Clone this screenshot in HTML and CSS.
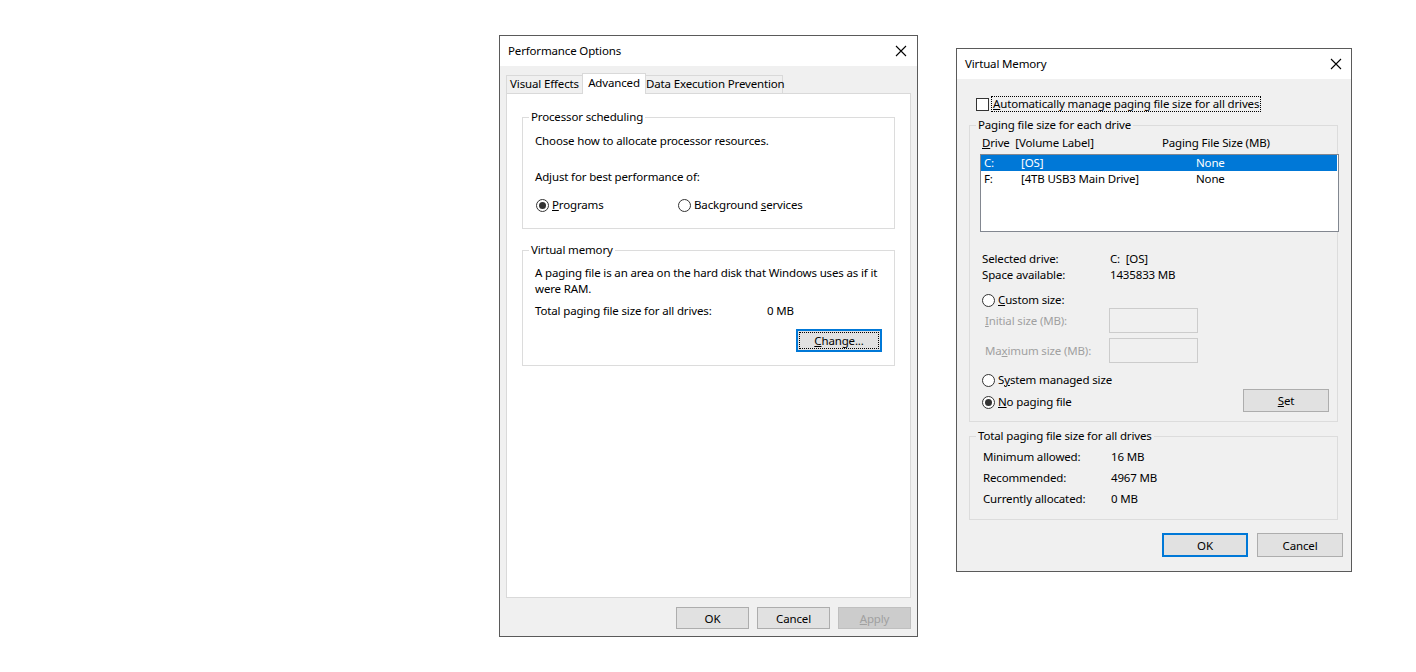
FILE: index.html
```html
<!DOCTYPE html>
<html>
  <head>
    <meta charset="utf-8" />
    <title>Performance Options</title>
    <link rel="stylesheet" href="styles.css">
  </head>
  <body>
    <div class="desktop">
      <div class="window perf">
        <div class="titlebar">
          <span class="title">Performance Options</span>
          <svg class="close" width="12" height="12" viewBox="0 0 12 12">
            <path d="M1 1 L11 11 M11 1 L1 11" stroke="#000" stroke-width="1.1" fill="none" />
          </svg>
        </div>
        <div class="win-body">
          <div class="tabs">
            <div class="tab tab-visual">Visual Effects</div>
            <div class="tab tab-adv active">Advanced</div>
            <div class="tab tab-dep">Data Execution Prevention</div>
          </div>
          <div class="tab-panel">
            <fieldset class="group sched">
              <legend>Processor scheduling</legend>
              <p class="line first">Choose how to allocate processor resources.</p>
              <p class="line adjust">Adjust for best performance of:</p>
              <div class="radio-row">
                <div class="radio-item programs"><span class="radio checked"></span><span><u>P</u>rograms</span></div>
                <div class="radio-item"><span class="radio"></span><span>Background <u>s</u>ervices</span></div>
              </div>
            </fieldset>
            <fieldset class="group vmem">
              <legend>Virtual memory</legend>
              <p class="line vm-desc">A paging file is an area on the hard disk that Windows uses as if it<br>were RAM.</p>
              <div class="kv total">
                <span class="k">Total paging file size for all drives:</span>
                <span class="v">0 MB</span>
              </div>
              <div class="change-row">
                <button class="btn btn-default change"><span class="focus"><u>C</u>hange...</span></button>
              </div>
            </fieldset>
          </div>
          <div class="button-row">
            <button class="btn">OK</button>
            <button class="btn">Cancel</button>
            <button class="btn disabled"><u>A</u>pply</button>
          </div>
        </div>
      </div>

      <div class="window vm">
        <div class="titlebar">
          <span class="title">Virtual Memory</span>
          <svg class="close" width="12" height="12" viewBox="0 0 12 12">
            <path d="M1 1 L11 11 M11 1 L1 11" stroke="#000" stroke-width="1.1" fill="none" />
          </svg>
        </div>
        <div class="win-body">
          <div class="check-row">
            <span class="checkbox"></span>
            <span class="focus"><u>A</u>utomatically manage paging file size for all drives</span>
          </div>
          <fieldset class="group each-drive">
            <legend>Paging file size for each drive</legend>
            <div class="list-head">
              <span class="col-drive"><u>D</u>rive&nbsp; [Volume Label]</span>
              <span>Paging File Size (MB)</span>
            </div>
            <div class="listbox">
              <div class="list-row selected">
                <span class="c1">C:</span><span class="c2">[OS]</span><span>None</span>
              </div>
              <div class="list-row">
                <span class="c1">F:</span><span class="c2">[4TB USB3 Main Drive]</span><span>None</span>
              </div>
            </div>
            <div class="kv sel first-kv">
              <span class="k">Selected drive:</span>
              <span class="v">C:&nbsp; [OS]</span>
            </div>
            <div class="kv sel">
              <span class="k">Space available:</span>
              <span class="v">1435833 MB</span>
            </div>
            <div class="radio-item custom"><span class="radio"></span><span><u>C</u>ustom size:</span></div>
            <div class="size-row">
              <span class="size-label"><u>I</u>nitial size (MB):</span>
              <span class="edit"></span>
            </div>
            <div class="size-row second">
              <span class="size-label">Ma<u>x</u>imum size (MB):</span>
              <span class="edit"></span>
            </div>
            <div class="radio-item sysman"><span class="radio"></span><span>S<u>y</u>stem managed size</span></div>
            <div class="nopage-row">
              <div class="radio-item"><span class="radio checked"></span><span><u>N</u>o paging file</span></div>
              <button class="btn set"><u>S</u>et</button>
            </div>
          </fieldset>
          <fieldset class="group totals">
            <legend>Total paging file size for all drives</legend>
            <div class="kv tot first-kv">
              <span class="k">Minimum allowed:</span>
              <span class="v">16 MB</span>
            </div>
            <div class="kv tot">
              <span class="k">Recommended:</span>
              <span class="v">4967 MB</span>
            </div>
            <div class="kv tot">
              <span class="k">Currently allocated:</span>
              <span class="v">0 MB</span>
            </div>
          </fieldset>
          <div class="button-row vm-buttons">
            <button class="btn btn-default wide">OK</button>
            <button class="btn wide">Cancel</button>
          </div>
        </div>
      </div>
    </div>
  </body>
</html>
```

FILE: styles.css
```css
body {
  margin: 0;
  background: #fff;
  font-family: "Noto Sans", "Open Sans", sans-serif;
  font-size: 11.5px;
  letter-spacing: -0.15px;
  line-height: 16px;
  color: #000;
}
p {
  margin: 0;
}
.desktop {
  position: relative;
  width: 1416px;
  height: 672px;
}

/* windows sit on the desktop canvas */
.window {
  position: absolute;
  box-sizing: border-box;
  border: 1px solid #5a5a5a;
  background: #f0f0f0;
  display: flex;
  flex-direction: column;
  white-space: nowrap;
}
.perf {
  left: 499px;
  top: 35px;
  width: 419px;
  height: 602px;
}
.vm {
  left: 956px;
  top: 48px;
  width: 396px;
  height: 524px;
}
.titlebar {
  height: 30px;
  background: #fff;
  display: flex;
  align-items: center;
  justify-content: space-between;
  padding: 0 10px 0 8px;
  flex-shrink: 0;
}
.vm .titlebar {
  padding-right: 9px;
}
.close {
  display: block;
}

.win-body {
  flex: 1;
}
.perf .win-body {
  padding: 7px 6px 6px 6px;
}
.vm .win-body {
  padding: 17px 13px 12px 12px;
}

/* tabs */
.tabs {
  display: flex;
  align-items: flex-end;
  height: 20px;
}
.tab {
  box-sizing: border-box;
  height: 18px;
  border: 1px solid #d9d9d9;
  border-bottom: none;
  background: #f0f0f0;
  text-align: center;
  line-height: 16px;
  margin-left: -1px;
}
.tab-visual {
  width: 77px;
  margin-left: 0;
}
.tab-adv {
  width: 64px;
}
.tab-dep {
  width: 138px;
}
.tab.active {
  position: relative;
  z-index: 1;
  height: 21px;
  margin-bottom: -1px;
  background: #fff;
  padding-top: 1px;
}
.tab-panel {
  box-sizing: border-box;
  height: 505px;
  border: 1px solid #d9d9d9;
  background: #fff;
  padding: 15px 15px;
}

/* group boxes */
.group {
  margin: 0;
  border: 1px solid #dcdcdc;
  min-width: 0;
  padding: 0 12px 15px 12px;
}
.group legend {
  padding: 0 2px;
  margin-left: -6px;
  line-height: 16px;
}
.line.first {
  margin-top: 8px;
}
.line.adjust {
  margin-top: 20px;
}
.radio-row {
  display: flex;
  margin-top: 12px;
  padding-left: 1px;
}
.radio-item {
  display: flex;
  align-items: center;
  height: 16px;
}
.radio-item.programs {
  width: 142px;
}
.radio {
  box-sizing: border-box;
  width: 13px;
  height: 13px;
  border: 1px solid #333;
  border-radius: 50%;
  background: #fff;
  margin-right: 3px;
  display: flex;
  align-items: center;
  justify-content: center;
  flex-shrink: 0;
}
.radio.checked::after {
  content: "";
  width: 7px;
  height: 7px;
  border-radius: 50%;
  background: #333;
}
.vmem {
  margin-top: 13px;
  padding-bottom: 13px;
}
.vm-desc {
  margin-top: 7px;
}
.kv {
  display: flex;
}
.kv .k {
  flex-shrink: 0;
}
.total {
  margin-top: 6px;
}
.total .k {
  width: 232px;
}
.change-row {
  display: flex;
  justify-content: flex-end;
  margin-top: 10px;
}

/* buttons */
.btn {
  box-sizing: border-box;
  width: 73px;
  height: 22px;
  padding: 0;
  border: 1px solid #adadad;
  background: #e1e1e1;
  font-family: inherit;
  font-size: 11.5px;
  letter-spacing: -0.15px;
  color: #000;
}
.btn-default {
  border: 2px solid #0078d7;
}
.btn.change {
  width: 86px;
  height: 23px;
  display: flex;
  align-items: center;
  justify-content: center;
  padding: 1px;
}
.btn.change .focus {
  flex: 1;
  align-self: stretch;
  border: 1px dotted #000;
  display: flex;
  align-items: center;
  justify-content: center;
}
.btn.disabled {
  background: #cccccc;
  border-color: #bfbfbf;
  color: #a0a0a0;
}
.button-row {
  display: flex;
  justify-content: flex-end;
  gap: 8px;
  margin-top: 9px;
}

/* virtual memory dialog */
.check-row {
  display: flex;
  align-items: center;
  height: 16px;
  padding-left: 7px;
}
.checkbox {
  box-sizing: border-box;
  width: 13px;
  height: 13px;
  border: 1px solid #333;
  background: #fff;
  margin-right: 2px;
}
.check-row .focus {
  border: 1px dotted #000;
  padding: 0 1px;
  line-height: 14px;
}
.each-drive {
  margin-top: 5px;
  padding-bottom: 9px;
}
.list-head {
  display: flex;
  margin-top: 2px;
}
.col-drive {
  width: 180px;
}
.listbox {
  box-sizing: border-box;
  width: 359px;
  height: 78px;
  margin: 3px 0 0 -2px;
  border: 1px solid #828790;
  background: #fff;
  position: relative;
}
.list-row {
  display: flex;
  height: 16px;
  padding-left: 3px;
  margin-right: 1px;
}
.list-row.selected {
  background: #0078d7;
  color: #fff;
}
.list-row .c1 {
  width: 37px;
}
.list-row .c2 {
  width: 175px;
}
.kv.sel .k {
  width: 128px;
}
.first-kv {
  margin-top: 19px;
}
.radio-item.custom {
  margin-top: 9px;
}
.size-row {
  display: flex;
  align-items: center;
  height: 25px;
}
.size-row.second {
  margin-top: 5px;
}
.size-label {
  width: 124px;
  padding-left: 3px;
  color: #a0a0a0;
}
.edit {
  box-sizing: border-box;
  width: 89px;
  height: 25px;
  border: 1px solid #cccccc;
  background: #f0f0f0;
}
.radio-item.sysman {
  margin-top: 9px;
}
.nopage-row {
  display: flex;
  align-items: flex-start;
  justify-content: space-between;
  margin-top: 1px;
  margin-right: -4px;
}
.nopage-row .radio-item {
  margin-top: 5px;
}
.btn.set {
  width: 86px;
  height: 23px;
}
.totals {
  margin-top: 6px;
  padding: 0 12px 12px 13px;
}
.totals legend {
  margin-left: -7px;
}
.totals .first-kv {
  margin-top: 5px;
}
.kv.tot {
  margin-top: 5px;
}
.kv.tot .k {
  width: 128px;
}
.vm-buttons {
  margin-top: 13px;
  margin-right: -5px;
  gap: 9px;
}
.btn.wide {
  width: 86px;
  height: 24px;
}
```
